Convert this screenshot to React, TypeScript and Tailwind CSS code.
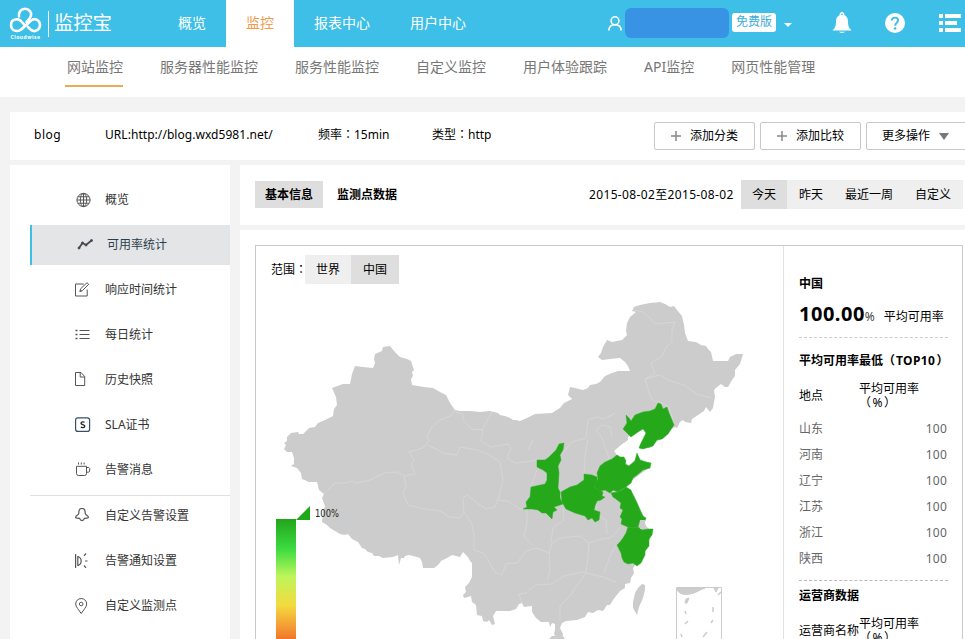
import React from "react";

const topNav = [
  { label: "概览", cls: "w-[68px]", active: false },
  { label: "监控", cls: "w-[68px]", active: true },
  { label: "报表中心", cls: "w-[96px]", active: false },
  { label: "用户中心", cls: "w-[96px]", active: false },
];

const subNav = [
  { label: "网站监控", active: true },
  { label: "服务器性能监控", active: false },
  { label: "服务性能监控", active: false },
  { label: "自定义监控", active: false },
  { label: "用户体验跟踪", active: false },
  { label: "API监控", active: false },
  { label: "网页性能管理", active: false },
];

const icons: Record<string, React.ReactNode> = {
  globe: (
    <g transform="translate(0.5 0)">
      <circle cx="8" cy="8" r="6.6" />
      <ellipse cx="8" cy="8" rx="3.2" ry="6.6" />
      <path d="M8 1.4v13.2M1.4 8h13.2M2.5 4.8h11M2.5 11.2h11" />
    </g>
  ),
  trend: (
    <g fill="#444b55" stroke="#444b55" transform="translate(-0.5 -1)">
      <path d="M2.5 12 L6 7 L9.5 9 L15 4.5" fill="none" strokeWidth="1.8" />
      <circle cx="2.5" cy="12" r="1" />
      <circle cx="6" cy="7" r="1" />
      <circle cx="9.5" cy="9" r="1" />
      <circle cx="15" cy="4.5" r="1" />
    </g>
  ),
  edit: (
    <g transform="translate(-0.3 -0.5)">
      <path d="M9 2.5H0.8v12h11.7V8" />
      <path d="M5.2 9.8 L6 7.2 L12.3 1.2 L14 2.8 L7.8 9 Z" />
      <path d="M5 10l2-.5" />
    </g>
  ),
  list: (
    <g>
      <path d="M4.5 3.5h10M4.5 7.5h10M4.5 11.5h10" />
      <path d="M.5 3.5h2M.5 7.5h2M.5 11.5h2" strokeWidth="1.4" />
    </g>
  ),
  file: (
    <g transform="translate(-0.3 -1)">
      <path d="M.8 1.5h5.5l3.7 4v9H.8z" />
      <path d="M5.5 1.500v4.500h4.500" />
    </g>
  ),
  sla: (
    <g transform="translate(0 -0.5)">
      <rect x="0.6" y="1.3" width="14" height="13.6" rx="2.2" stroke="#34506a" strokeWidth="1.2" />
      <path
        d="M9.6 5.8C8.6 5.1 6 5 6 6.7c0 1.7 3.8 1 3.8 2.9 0 1.8-2.7 1.700-4 .9"
        stroke="#222"
        strokeWidth="1.3"
      />
    </g>
  ),
  cup: (
    <g transform="translate(0 -0.5)">
      <path d="M1.5 4.8h10v7.2q0 2-2 2h-6q-2 0-2-2z" />
      <path d="M11.5 6h2.3l.9 1v2.5l-1 1.2h-2.2M3.5 1v2M6.3 1v2M9.1 1v2" />
    </g>
  ),
  bell: (
    <g transform="translate(0 -1)">
      <path strokeWidth="1.2" d="M7 1.500C4 1.500 3.800 4 3.800 6.200C3.800 8 .6 8.400 .6 10.200C.6 11.300 3 11.300 4.600 11.400C5 12.600 6 13.600 7 13.600S9 12.600 9.400 11.400C11 11.300 13.400 11.300 13.400 10.200C13.400 8.400 10.200 8 10.200 6.200C10.200 4 10 1.500 7 1.500Z" />
    </g>
  ),
  horn: (
    <g>
      <path strokeWidth="1.2" d="M.6 1v14M2.800 3v10M2.800 3.500c4.500 1.500 4.500 7.500 0 9.200M9 2.800L11 .5M10 8h2.500M9 12.500l2 2.300" />
    </g>
  ),
  pin: (
    <g>
      <path d="M6.200 15.500C4 12 .7 9 .7 6a5.500 5.500 0 0 1 11 0c0 3-3.300 6-5.500 9.500Z" />
      <circle cx="6.200" cy="6" r="1.800" />
    </g>
  ),
};

const sideTop = [
  { icon: "globe", label: "概览" },
  { icon: "trend", label: "可用率统计" },
  { icon: "edit", label: "响应时间统计" },
  { icon: "list", label: "每日统计" },
  { icon: "file", label: "历史快照" },
  { icon: "sla", label: "SLA证书" },
  { icon: "cup", label: "告警消息" },
];
const sideBottom = [
  { icon: "bell", label: "自定义告警设置" },
  { icon: "horn", label: "告警通知设置" },
  { icon: "pin", label: "自定义监测点" },
];

function SideItem({ icon, label }: { icon: string; label: string }) {
  const active = icon === "trend";
  return (
    <li
      className={
        active
          ? "mb-[5px] flex h-10 items-center border-l-2 border-[#3dbfe6] bg-[#e4e5e6] pl-[45px] text-[#2c3e50]"
          : "mb-[5px] flex h-10 items-center pl-[45px] text-[#333]"
      }
    >
      <svg width="17" height="16" viewBox="0 0 17 16" fill="none" stroke="#555" strokeWidth="1">
        {icons[icon]}
      </svg>
      <span className="ml-[13px] leading-4">{label}</span>
    </li>
  );
}

function Logo() {
  return (
    <div className="flex w-[158px] items-center pl-[9px]">
      <div className="flex w-[33px] flex-col items-center">
        <svg width="33" height="26" viewBox="0 0 33 26" fill="none" stroke="#fff" strokeWidth="2.600" strokeLinecap="round">
          <path d="M15 17.500C12 14 10.500 12 7.500 12.300C4 12.600 2 15 2 18C2 21.500 4.500 24 8 24C11 24 13 22 15 20L22 13.500C24 12 27 11.800 29 13.500C32 16 31.500 21 28.500 23C26 24.600 23 24 21 22L19 20" />
          <path d="M10 9.500C9.300 5 12.300 1.700 16 1.700C20 1.700 22.800 5 22 8.500C21.500 11 19.500 13 17.500 15" />
        </svg>
        <span className="mt-[1px] text-[5px] font-bold leading-[6px] tracking-[0.500px]">Cloudwise</span>
      </div>
      <div className="ml-[6px] h-[26px] w-px bg-white" />
      <div className="mb-[2px] ml-[5px] text-[19.500px] leading-[28px] tracking-[-0.3px]">监控宝</div>
    </div>
  );
}

const outline =
  "455,410 450,403 446,395 440,392 433,388 424,387 412,385 411,379 413,376 412,372 414,370 411,361 407,359 400,357 394,351 390,346 383,347 382,351 375,354 374,359 375,363 373,368 363,367 355,366 352,374 350,384 343,384 332,388 336,397 337,405 334,409 333,416 325,420 318,423 315,427 309,428 303,434 299,434 298,432 291,433 287,437 287,441 284,443 286,445 284,449 287,452 292,452 294,458 294,464 291,466 297,468 301,473 302,479 309,482 317,482 319,490 324,494 322,498 325,506 323,512 322,522 327,525 330,528 340,534 345,535 348,534 352,539 358,542 362,548 365,549 368,552 372,553 374,556 379,556 383,558 393,557 398,555 399,565 401,558 404,558 405,556 409,555 417,557 420,558 422,562 423,568 434,568 438,565 441,561 447,558 452,555 460,557 463,552 468,557 470,561 472,563 472,577 469,583 465,587 466,592 463,595 464,598 471,596 472,602 476,605 477,615 482,616 483,621 487,622 489,620 492,625 495,624 493,616 496,611 505,611 510,611 516,609 519,604 522,603 524,607 532,606 532,612 536,618 541,622 549,622 550,627 552,623 555,624 555,630 554,634 557,638 562,638 563,634 560,628 562,623 566,621 577,620 585,617 588,612 593,613 598,610 603,611 607,605 610,605 613,600 616,596 620,591 625,588 625,584 630,583 631,578 634,573 633,568 635,565 645,553 652,532 646,526 643,515 634,495 626,487 631,481 650,467 650,463 641,460 637,454 634,461 628,466 624,459 617,455 614,451 621,445 628,440 628,437 637,432 643,428 647,432 644,440 641,444 639,448 650,448 656,441 664,438 671,429 675,427 677,428 680,422 683,420 685,422 691,423 692,419 701,413 704,411 706,407 710,412 713,408 714,402 715,397 714,390 717,387 721,384 725,387 728,387 732,380 735,376 735,370 740,364 743,354 736,354 730,357 728,361 722,361 713,361 711,352 708,349 706,346 701,345 696,342 688,341 685,333 684,325 682,316 677,310 674,306 670,307 665,304 660,302 650,303 640,305 634,307 632,311 636,312 630,317 627,323 626,331 627,335 622,340 617,341 612,342 607,340 603,347 601,353 598,357 602,360 610,359 620,358 625,362 628,366 630,371 618,371 612,373 605,376 600,382 596,384 590,385 588,388 583,390 575,388 570,387 568,395 572,399 564,403 560,408 555,411 552,413 535,414 527,418 520,421 516,420 513,420 510,418 505,416 500,415 498,413 490,411 480,412 470,411 460,411";

const provinces = [
  "626,415 629,418 631,421 635,415 643,412 650,411 655,409 658,403 661,404 663,409 667,407 669,413 672,420 674,425 668,434 662,439 657,440 653,446 643,449 639,448 641,443 646,433 643,429 638,432 631,437 628,434 623,429 627,423",
  "564,443 559,444 556,450 549,457 545,460 537,460 537,467 543,470 547,473 547,480 545,484 536,486 531,487 530,497 526,502 527,507 523,509 532,509 538,510 542,513 546,513 552,519 553,512 557,510 554,507 563,504 560,498 560,492 558,488 559,473 558,466 561,460 560,455 563,450",
  "561,492 570,487 577,485 581,482 584,480 584,474 592,475 597,477 597,482 594,487 599,490 603,492 602,496 605,497 601,500 597,501 595,506 594,510 600,512 599,520 595,522 592,518 588,520 585,516 575,513 566,509 562,502",
  "597,473 600,466 605,462 612,459 617,455 620,457 624,457 626,461 625,464 629,466 635,461 637,453 640,460 646,462 651,463 650,468 643,470 637,475 633,478 631,483 626,487 621,490 618,492 613,490 610,493 605,490 600,491 594,487 598,479",
  "611,493 618,492 622,490 626,487 631,490 633,495 637,503 640,510 643,516 646,518 645,521 640,520 638,527 633,528 628,527 621,524 622,519 620,517 623,510 620,508 621,503 616,499 613,497",
  "628,527 633,528 638,527 642,530 648,529 653,529 652,535 649,539 649,546 645,551 645,555 641,563 637,566 633,563 628,564 624,562 622,558 621,553 617,545 620,542 623,538 626,533",
];

const borders = [
  "325,493 335,483 345,483 352,481 357,483 370,480 384,473 396,472 405,476 415,474 411,465 414,460 409,452 423,448 429,441 427,437 431,428 440,420 452,415 455,410",
  "404,476 406,486 403,493 408,505 425,509 440,511 449,517 460,518 464,512 463,498 467,495 476,502 486,509 495,507 499,497 503,480 500,462 488,454 477,450 460,447 457,455 444,453 436,449 427,445",
  "455,412 462,414 464,421 471,429 483,430 481,441 491,447 508,444 511,448 507,458 515,463 526,462 537,460",
  "497,500 508,501 514,505 520,509 524,509",
  "464,512 472,524 474,535 474,550 483,553 488,560 495,572 502,575 506,564 517,563 526,551 536,548 549,553 552,543 560,538 580,536 589,543 588,558 586,572 577,573 564,576 552,584 535,585 526,593 519,594 522,603",
  "527,507 527,523 524,536 532,545",
  "549,551 550,568 548,580",
  "563,508 564,520 553,528 551,542",
  "589,543 601,539 610,538 616,533 620,527",
  "586,573 575,588 570,596 560,606 560,620",
  "586,573 603,577 616,582",
  "616,545 610,556 604,573",
  "596,503 597,515 606,520 607,534",
  "561,455 572,442 586,438 588,420 597,417 604,419 615,413",
  "588,439 585,456 584,474",
  "597,473 609,458 602,438 596,430 602,425 610,427 612,436",
  "634,310 643,312 651,319 655,324 675,322 672,330 672,342 666,347 662,356 651,363 655,373 645,379 651,398 657,403",
  "646,379 659,375 668,380 684,385 697,394 711,398",
  "657,401 669,407 674,424",
  "482,430 492,412",
  "528,450 533,440",
  "537,470 531,487",
];

function ChinaMap() {
  return (
    <svg className="block" width="527" height="393" viewBox="256 246 527 393">
      <defs>
        <linearGradient id="scale" x1="0" y1="519" x2="0" y2="639" gradientUnits="userSpaceOnUse">
          <stop offset="0" stopColor="#22a51b" />
          <stop offset="0.250" stopColor="#3cdb40" />
          <stop offset="0.480" stopColor="#bdf65b" />
          <stop offset="0.720" stopColor="#f3da3e" />
          <stop offset="0.900" stopColor="#f49a34" />
          <stop offset="1" stopColor="#f17628" />
        </linearGradient>
      </defs>
      <polygon points={outline} fill="#ccc" />
      <polygon points="642,584 645,585 645,590 643,598 639,607 637,615 633,608 633,602 635,593 638,588" fill="#ccc" />
      <path d="M549 639 L552 636 L562 635 L565 639 Z" fill="#ccc" />
      <g fill="none" stroke="#d8d8d8" strokeWidth="0.800" strokeLinejoin="round">
        {borders.map((p) => (
          <polyline key={p} points={p} />
        ))}
      </g>
      <g fill="#25a91b" stroke="#2fae26" strokeWidth="0.500">
        {provinces.map((p) => (
          <polygon key={p} points={p} />
        ))}
      </g>
      <path d="M640 520 L645 520 L645 528 L640 529 Z" fill="#ccc" />
      <path d="M676.500 639V587.500H721.500V639" fill="none" stroke="#ccc" />
      <path
        d="M677 588h28c-6 2-9 5-15 6q-9 2-13-4ZM686 599l3-1-2 5h-2ZM714 588h4l-2 4Z"
        fill="#ccc"
        stroke="#ccc"
      />
      <path
        d="M685 611l1 3M685 624l3-3M681 634l1 3M718 595l3-3M713 607v5M711 623l2-3M703 637l4-5"
        fill="none"
        stroke="#ccc"
        strokeWidth="1.500"
      />
      <rect x="276" y="519" width="20" height="120" fill="url(#scale)" />
      <path d="M296 520 L310 506 V520 Z" fill="#20a81b" />
      <text x="315" y="517" fontSize="11" fill="#222" style={{ fontFamily: '"DejaVu Sans", sans-serif' }} textLength="24" lengthAdjust="spacingAndGlyphs">
        100%
      </text>
    </svg>
  );
}

const regions = ["山东", "河南", "辽宁", "江苏", "浙江", "陕西"];

function ToolButton({ label }: { label: string }) {
  return (
    <button className="mr-[5px] flex h-7 w-[101px] shrink-0 items-center justify-center rounded-[2px] border border-[#c8c8c8] bg-white">
      <svg width="10" height="10" viewBox="0 0 10 10" className="mr-[9px]" stroke="#888" strokeWidth="1.500">
        <path d="M5 0v10M0 5h10" />
      </svg>
      {label}
    </button>
  );
}

export default function App() {
  return (
    <div className="flex h-[639px] w-[965px] flex-col overflow-hidden bg-[#f3f3f3] font-['Noto_Sans','Noto_Sans_CJK_SC',sans-serif] text-[12px] leading-4 text-black">
      <header className="flex h-[47px] shrink-0 bg-[#3dbfe8] text-white">
        <Logo />
        <nav className="flex text-[14px]">
          {topNav.map((n) => (
            <a
              key={n.label}
              className={`flex h-[47px] items-center justify-center pb-[2px] ${n.cls} ${n.active ? "bg-white text-[#f39a4e]" : ""}`}
            >
              {n.label}
            </a>
          ))}
        </nav>
        <div className="ml-[122px] flex h-[45px] items-center">
          <svg className="mt-[2px]" width="14" height="15" viewBox="0 0 14 15" fill="none" stroke="#fff" strokeWidth="1.600">
            <ellipse cx="7" cy="4.800" rx="3.900" ry="4" />
            <path d="M.9 14.500C1 10.800 3.500 8.800 7 8.800s6 2 6.100 5.700" />
          </svg>
          <div className="ml-[3px] h-[30px] w-[104px] rounded-[6px] bg-[#3993e4]" />
          <div className="ml-[3px] flex h-[19px] w-[44px] items-center justify-center rounded-[3px] bg-white pb-px text-[#3dacda]">
            免费版
          </div>
          <svg className="ml-2 mt-1" width="8" height="4" viewBox="0 0 8 4">
            <path d="M0 0h8L4 4Z" fill="#fff" />
          </svg>
          <svg className="ml-[40px]" width="20" height="22" viewBox="0 0 20 22" fill="#fff">
            <path d="M10 0a2.500 2.500 0 0 1 2.300 3.300C15.500 4.500 16 7.500 16 10c0 4 1 6 3.500 8.500H.5C3 16 4 14 4 10c0-2.500.5-5.500 3.700-6.700A2.500 2.500 0 0 1 10 0Z" />
            <circle cx="10" cy="2.400" r=".8" fill="#3dbfe8" />
            <path d="M7 19.800h6q-3 2.500-6 0Z" />
          </svg>
          <svg className="ml-[33px]" width="20" height="20" viewBox="0 0 20 20">
            <circle cx="10" cy="10" r="10" fill="#fff" />
            <path d="M6.800 7.500C6.800 3.500 13.300 3.800 13.200 7.300c0 2.300-3.100 2.700-3.100 5.500" fill="none" stroke="#3dbfe8" strokeWidth="1.900" />
            <circle cx="10.100" cy="15.500" r="1.300" fill="#3dbfe8" />
          </svg>
          <svg className="ml-[34px]" width="22" height="18" viewBox="0 0 22 18" fill="#fff">
            <path d="M0 0h4v4H0zM6 0h16v4H6zM0 7h4v4H0zM6 7h12v4H6zM0 14h4v4H0zM6 14h16v4H6z" />
          </svg>
        </div>
      </header>

      <nav className="flex h-[50px] shrink-0 gap-[33px] bg-white pl-[65px] text-[14px] text-[#777]">
        {subNav.map((n) => (
          <a
            key={n.label}
            className={`flex h-10 items-center whitespace-nowrap pt-[2px] ${n.active ? "mr-[2px] w-[58px] border-b-2 border-[#e8ac55] pl-[2px]" : "border-b-2 border-transparent px-[2px]"}`}
          >
            {n.label}
          </a>
        ))}
      </nav>

      <section className="ml-[10px] mt-[15px] flex h-12 shrink-0 items-center bg-white pl-6">
        <span className="w-[71px] shrink-0 pb-[2px] tracking-[0.500px]">blog</span>
        <span className="w-[213px] shrink-0 pb-[2px] tracking-[0.050px]">URL:http://blog.wxd5981.net/</span>
        <span className="w-[114px] shrink-0 pb-[2px] font-['Noto_Sans','Noto_Sans_CJK_TC',sans-serif]">频率：15min</span>
        <span className="w-[222px] shrink-0 pb-[2px] font-['Noto_Sans','Noto_Sans_CJK_TC',sans-serif]">类型：http</span>
        <ToolButton label="添加分类" />
        <ToolButton label="添加比较" />
        <button className="flex h-7 w-[110px] shrink-0 items-center rounded-[2px] border border-[#c8c8c8] bg-white pl-[15px]">
          更多操作
          <svg className="ml-[9px]" width="10" height="7" viewBox="0 0 10 7">
            <path d="M0 0h10L5 7Z" fill="#777" />
          </svg>
        </button>
      </section>

      <div className="mt-[5px] flex min-h-0 grow">
        <aside className="ml-[10px] w-[220px] shrink-0 bg-white pl-5 pt-[15px]">
          <ul>
            {sideTop.map((s) => (
              <SideItem key={s.label} {...s} />
            ))}
          </ul>
          <ul className="border-t border-[#e0e0e0]">
            {sideBottom.map((s) => (
              <SideItem key={s.label} {...s} />
            ))}
          </ul>
        </aside>

        <main className="ml-[10px] flex w-[725px] shrink-0 flex-col">
          <div className="flex h-[60px] shrink-0 items-center bg-white pl-[15px]">
            <div className="mb-px flex h-[27px] w-[68px] items-center justify-center bg-[#dedede] font-bold">基本信息</div>
            <div className="ml-[14px] font-bold">监测点数据</div>
            <div className="ml-auto w-[152px] whitespace-nowrap tracking-[0.350px]">2015-08-02至2015-08-02</div>
            <div className="mb-px mr-[2px] flex h-[29px] w-[222px] items-center bg-[#efefef]">
              <span className="flex h-full w-[46px] items-center justify-center bg-[#dedede]">今天</span>
              <span className="w-[48px] text-center">昨天</span>
              <span className="w-[68px] text-center">最近一周</span>
              <span className="w-[60px] text-center">自定义</span>
            </div>
          </div>

          <div className="mt-[5px] min-h-0 grow bg-white pl-[15px] pt-[15px]">
            <div className="flex h-[410px] w-[708px] border border-[#c9c9c9]">
              <div className="relative w-[527px] shrink-0">
                <ChinaMap />
                <div className="absolute left-[15px] top-[9px] flex h-[29px] items-center">
                  <span className="w-[34px] whitespace-nowrap font-['Noto_Sans','Noto_Sans_CJK_TC',sans-serif]">范围：</span>
                  <span className="flex h-full w-[46px] items-center justify-center bg-[#efefef]">世界</span>
                  <span className="flex h-full w-[48px] items-center justify-center bg-[#dedede]">中国</span>
                </div>
              </div>
              <div className="w-[181px] shrink-0 border-l border-[#e2e2e2] pl-[15px] pt-[30px]">
                <div className="font-bold">中国</div>
                <div className="mt-[7px] flex h-[30px] items-center">
                  <span className="text-[20px] font-bold leading-[30px] tracking-[0.500px]">100.00</span>
                  <span className="mt-[5px] text-[#444]">%</span>
                  <span className="ml-[9px] mt-[5px]">平均可用率</span>
                </div>
                <div className="mt-[8px] w-[149px] border-t border-dashed border-[#ccc]" />
                <div className="mt-[15px] whitespace-nowrap font-bold">
                  平均可用率最低（<span className="mx-px tracking-[0.400px]">TOP10</span>）
                </div>
                <div className="mt-[12px] flex h-[30px] items-center">
                  <span className="w-[60px]">地点</span>
                  <span className="w-[70px] leading-[14px]">
                    平均可用率（<span className="mx-[1.500px]">%</span>）
                  </span>
                </div>
                <ul className="mt-[5px] w-[148px] text-[#666]">
                  {regions.map((r) => (
                    <li key={r} className="flex h-[26px] items-center justify-between">
                      <span>{r}</span>
                      <span className="tracking-[0.200px]">100</span>
                    </li>
                  ))}
                </ul>
                <div className="mt-[8px] w-[149px] border-t border-dashed border-[#bbb]" />
                <div className="mt-[7px] font-bold">运营商数据</div>
                <div className="mt-[12px] flex h-[30px] items-center">
                  <span className="w-[60px]">运营商名称</span>
                  <span className="w-[70px] leading-[14px]">
                    平均可用率（<span className="mx-[1.500px]">%</span>）
                  </span>
                </div>
              </div>
            </div>
          </div>
        </main>
      </div>
    </div>
  );
}
